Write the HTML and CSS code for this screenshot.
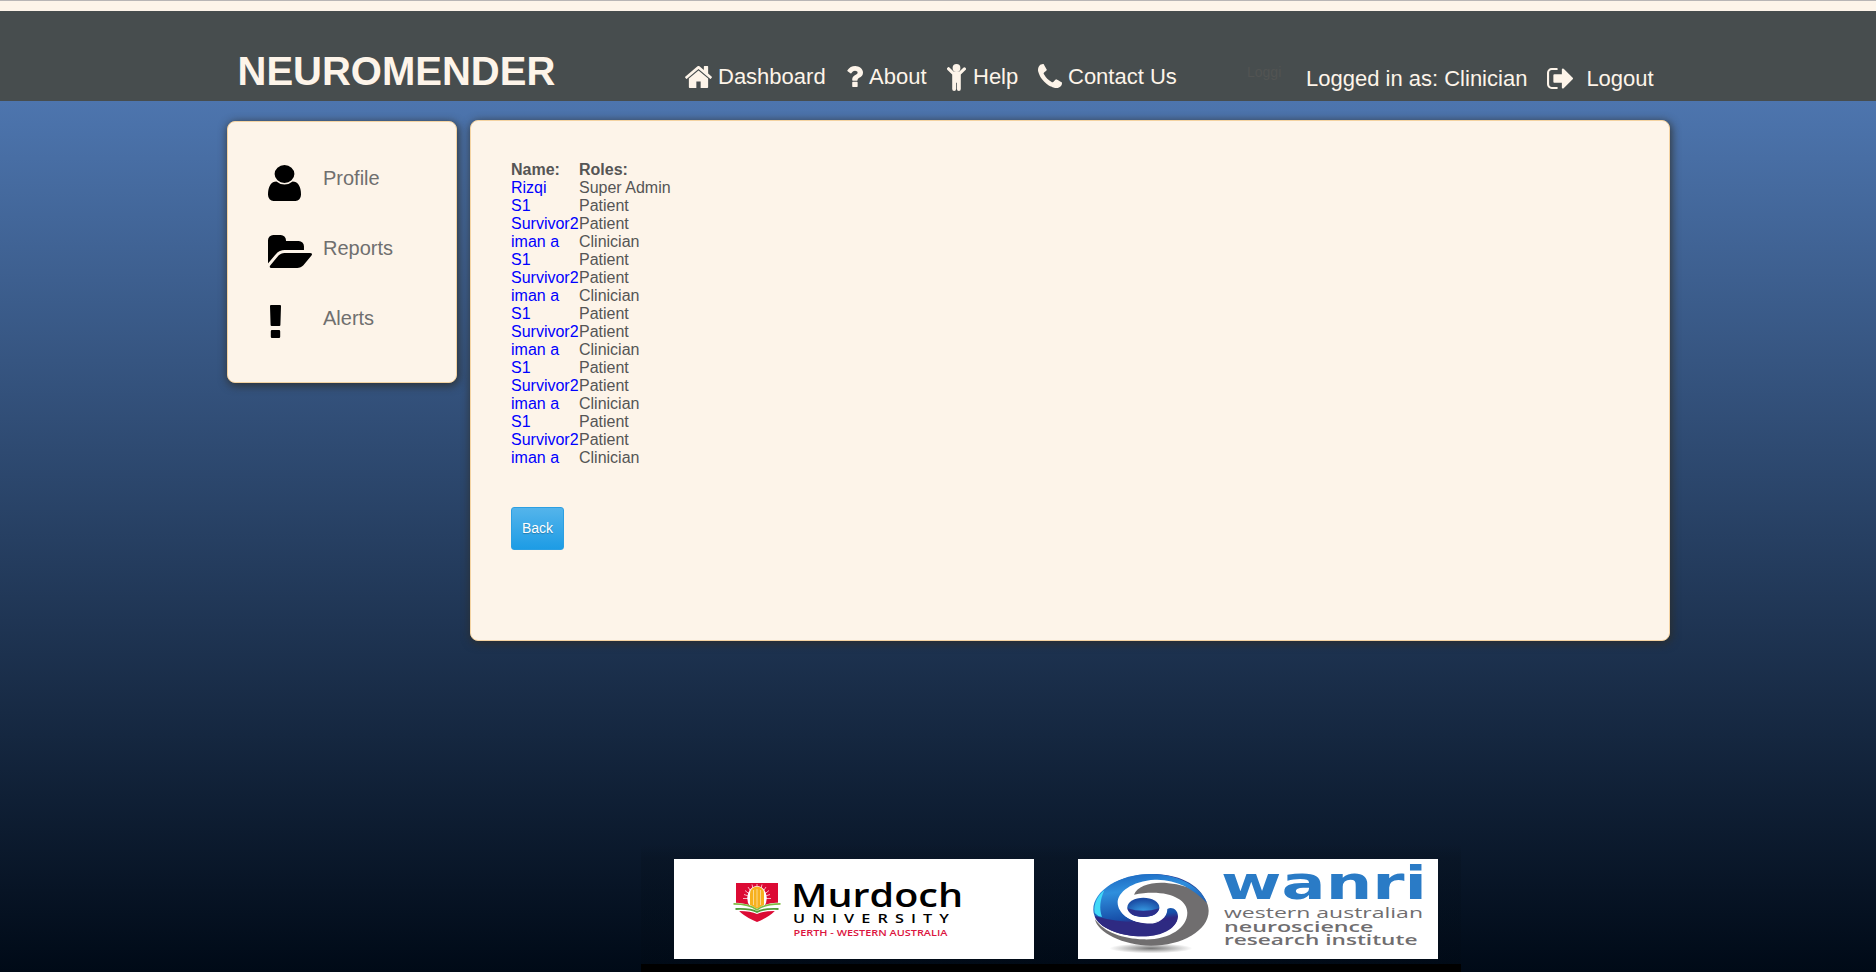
FILE: index.html
```html
<!DOCTYPE html>
<html lang="en">
<head>
<meta charset="utf-8">
<title>Neuromender</title>
<link rel="stylesheet" href="styles.css">
</head>
<body>
<header class="header">
  <h1 class="brand">NEUROMENDER</h1>
  <nav class="nav">
    <a class="nav-item home"><svg class="ic-home" viewBox="89 256 1614 1280" preserveAspectRatio="none"><path d="M1472 992v480q0 26-19 45t-45 19h-384v-384h-256v384h-384q-26 0-45-19t-19-45v-480q0-1 .5-3t.5-3l575-474 575 474q1 2 1 6zm223-69l-62 74q-8 9-21 11h-3q-13 0-21-7l-692-577-692 577q-12 8-24 7-13-2-21-11l-62-74q-8-10-7-23.5t11-21.5l719-599q32-26 76-26t76 26l244 204v-195q0-14 9-23t23-9h192q14 0 23 9t9 23v408l219 182q10 8 11 21.5t-7 23.5z"/></svg><span>Dashboard</span></a>
    <a class="nav-item about"><svg class="ic-question" viewBox="460 256 944 1280" preserveAspectRatio="none"><path d="M1088 1256v240q0 16-12 28t-28 12h-240q-16 0-28-12t-12-28v-240q0-16 12-28t28-12h240q16 0 28 12t12 28zm316-600q0 54-15.5 101t-35 76.5-55 59.5-57.5 43.5-61 35.5q-41 23-68.5 65t-27.5 67q0 17-12 32.5t-28 15.5h-240q-15 0-25.5-18.5t-10.5-37.5v-45q0-83 65-156.5t143-108.5q59-27 84-56t25-76q0-42-46.5-74t-107.5-32q-65 0-108 29-35 25-107 115-13 16-31 16-12 0-25-8l-164-125q-13-10-15.5-25t5.5-28q160-266 464-266 80 0 161 31t146 83 106 127.5 41 158.5z"/></svg><span>About</span></a>
    <a class="nav-item help"><svg class="ic-child" viewBox="0 0 19 27"><circle cx="9.5" cy="4" r="3.9"/><path d="M.5 3.7a1.5 1.5 0 0 1 2.2 0L6.6 7.6h5.8l3.9-3.9a1.5 1.5 0 0 1 2.2 2.2L13.8 10.6V25a1.8 1.8 0 0 1-3.9 0V18.8H9.1V25a1.8 1.8 0 0 1-3.9 0V10.6L.5 5.9a1.5 1.5 0 0 1 0-2.2z"/></svg><span>Help</span></a>
    <a class="nav-item contact"><svg class="ic-phone" viewBox="192 128 1408 1408" preserveAspectRatio="none"><path d="M1600 1240q0 27-10 70.5t-21 68.5q-21 50-122 106-94 51-186 51-27 0-52.5-3.5t-57.5-12.5-47.5-14.5-55.5-20.5-49-18q-98-35-175-83-128-79-264.5-215.5t-215.5-264.5q-48-77-83-175-3-9-18-49t-20.5-55.5-14.5-47.5-12.5-57.5-3.5-52.5q0-92 51-186 56-101 106-122 25-11 68.5-21t70.5-10q14 0 21 3 18 6 53 76 11 19 30 54t35 63.5 31 53.5q3 4 17.5 25t21.5 35.5 7 28.5q0 20-28.5 50t-62 55-62 53-28.5 46q0 9 5 22.5t8.5 20.5 14 24 11.5 19q76 137 174 235t235 174q2 1 19 11.5t24 14 20.5 8.5 22.5 5q18 0 46-28.5t53-62 55-62 50-28.5q14 0 28.5 7t35.5 21.5 25 17.5q25 15 53.5 31t63.5 35 54 30q70 35 76 53 3 7 3 21z"/></svg><span>Contact Us</span></a>
  </nav>
  <span class="ghost">Loggi</span>
  <div class="session">
    <span>Logged in as: Clinician</span>
    <svg class="ic-logout" viewBox="64 256 1568 1280" preserveAspectRatio="none"><path d="M704 1440q0 4 1 20t.5 26.5-3 23.5-10 19.5-20.5 6.5h-320q-119 0-203.5-84.5t-84.5-203.5v-704q0-119 84.5-203.5t203.5-84.5h320q13 0 22.5 9.5t9.5 22.5q0 4 1 20t.5 26.5-3 23.5-10 19.5-20.5 6.5h-320q-66 0-113 47t-47 113v704q0 66 47 113t113 47h312l11.5 1 11.5 3 8 5.5 7 9 2 13.5zm928-544q0 26-19 45l-544 544q-19 19-45 19t-45-19-19-45v-288h-448q-26 0-45-19t-19-45v-384q0-26 19-45t45-19h448v-288q0-26 19-45t45-19 45 19l544 544q19 19 19 45z"/></svg>
    <span>Logout</span>
  </div>
</header>
<div class="page">
  <main class="columns">
    <aside class="card sidebar">
      <a class="side-item"><svg class="ic-user" viewBox="256 128 1280 1536" preserveAspectRatio="none"><path d="M1536 1399q0 109-62.5 187t-150.5 78h-854q-88 0-150.5-78t-62.5-187q0-85 8.5-160.5t31.5-152 58.5-131 94-89 134.5-34.5q131 128 313 128t313-128q76 0 134.5 34.5t94 89 58.5 131 31.5 152 8.5 160.5zm-256-887q0 159-112.500 271.500t-271.500 112.500-271.500-112.500-112.500-271.500 112.500-271.500 271.500-112.500 271.500 112.500 112.500 271.500z"/></svg><span>Profile</span></a>
      <a class="side-item"><svg class="ic-folder" viewBox="0 128 1879 1408" preserveAspectRatio="none"><path d="M1879 952q0 31-31 66l-336 396q-43 51-120.5 86.5t-143.5 35.5h-1088q-34 0-60.5-13t-26.5-43q0-31 31-66l336-396q43-51 120.5-86.5t143.5-35.5h1088q34 0 60.500 13t26.500 43zm-343-344v160h-832q-94 0-197 47.500t-164 119.500l-337 396-5 6q0-4-.5-12.500t-.5-12.500v-960q0-92 66-158t158-66h320q92 0 158 66t66 158v32h544q92 0 158 66t66 158z"/></svg><span>Reports</span></a>
      <a class="side-item"><svg class="ic-alert" viewBox="0 0 11 33"><path d="M1 0h9q1 0 1 1l-.6 19q0 1-1 1H1.600q-1 0-1-1L0 1q0-1 1-1zM2 25h7q1.200 0 1.200 1.200v5.600q0 1.200-1.200 1.200H2Q.8 33 .8 31.800v-5.600Q.8 25 2 25z"/></svg><span>Alerts</span></a>
    </aside>
    <section class="card content">
      <table class="users">
        <tr><th>Name:</th><th>Roles:</th></tr>
        <tr><td><a>Rizqi</a></td><td>Super Admin</td></tr>
        <tr><td><a>S1</a></td><td>Patient</td></tr>
        <tr><td><a>Survivor2</a></td><td>Patient</td></tr>
        <tr><td><a>iman a</a></td><td>Clinician</td></tr>
        <tr><td><a>S1</a></td><td>Patient</td></tr>
        <tr><td><a>Survivor2</a></td><td>Patient</td></tr>
        <tr><td><a>iman a</a></td><td>Clinician</td></tr>
        <tr><td><a>S1</a></td><td>Patient</td></tr>
        <tr><td><a>Survivor2</a></td><td>Patient</td></tr>
        <tr><td><a>iman a</a></td><td>Clinician</td></tr>
        <tr><td><a>S1</a></td><td>Patient</td></tr>
        <tr><td><a>Survivor2</a></td><td>Patient</td></tr>
        <tr><td><a>iman a</a></td><td>Clinician</td></tr>
        <tr><td><a>S1</a></td><td>Patient</td></tr>
        <tr><td><a>Survivor2</a></td><td>Patient</td></tr>
        <tr><td><a>iman a</a></td><td>Clinician</td></tr>
      </table>
      <button class="back">Back</button>
    </section>
  </main>
  <footer class="footer">
    <svg class="logo" viewBox="0 0 360 100">
      <path fill="#dc0a34" d="M62 24h42v21q0 9-21 18-21-9-21-18z"/>
      <g stroke="#fff" stroke-width=".7"><path d="M83 25v10M78 25.500l2 8M88 25.500l-2 8M74 28l4 6M92 28l-4 6M71 31.500l5 4M95 31.500l-5 4M70 35.500l6 2M96 35.500l-6 2M69 39.500h28"/></g>
      <ellipse cx="83" cy="39" rx="9.800" ry="12" fill="#fff"/>
      <path fill="#f7b11e" d="M76 35q0-7 7-7.500 7 .5 7 7.500v11l-7 4-7-4z"/>
      <path stroke="#fff" stroke-width=".5" d="M79.500 31v15M83 30v18M86.500 31v15"/>
      <path fill="#fff" d="M58 43.500q17 0 25 6.500 8-6.500 25-6.500l-4 8.500q-14-.5-21 3-7-3.500-21-3z"/>
      <path fill="none" stroke="#7dbb42" stroke-width="1.700" d="M59.500 44.800q16 0 23.500 6 7.500-6 23.500-6"/>
      <path fill="none" stroke="#519b38" stroke-width="1.900" d="M61.500 50q15-.7 21.500 3 6.500-3.700 21.500-3"/>
      <text class="murdoch" x="117" y="47.700" textLength="172" lengthAdjust="spacingAndGlyphs">Murdoch</text>
      <text class="university" transform="translate(119 63.500) scale(1.3 1)" textLength="120">UNIVERSITY</text>
      <text class="perth" x="119.500" y="77" textLength="154" lengthAdjust="spacingAndGlyphs">PERTH - WESTERN AUSTRALIA</text>
    </svg>
    <svg class="logo" viewBox="0 0 360 100">
      <defs>
        <linearGradient id="blue" x1=".1" y1="0" x2=".35" y2="1"><stop offset="0" stop-color="#1b63bd"/><stop offset=".3" stop-color="#2f8fdd"/><stop offset=".72" stop-color="#174fa9"/><stop offset=".8" stop-color="#302783"/></linearGradient>
        <linearGradient id="rim"><stop offset=".3" stop-color="#2b7fd0"/><stop offset=".6" stop-color="#2d2b86"/><stop offset="1" stop-color="#2363ad"/></linearGradient>
        <radialGradient id="eye" cx=".5" cy=".75" r=".65"><stop offset="0" stop-color="#38a2e8"/><stop offset="1" stop-color="#1b4ca4"/></radialGradient>
        <radialGradient id="shade"><stop offset="0" stop-color="#777"/><stop offset="1" stop-color="#fff"/></radialGradient>
      </defs>
      <g transform="translate(-18 -19) scale(.33333)">
        <ellipse cx="273" cy="325" rx="125" ry="15" fill="url(#shade)"/>
        <path fill="#706e6f" d="M222 164C232 137 280 124 325 130C392 136 446 165 446 212C446 272 365 317 273 317C190 317 111 276 105 237C132 278 190 296 250 298C325 301 382 264 382 218C382 175 318 146 222 164z"/>
        <path fill="url(#rim)" d="M160 130C245 82 405 92 441 189C408 128 310 100 210 122z"/>
        <path fill="url(#blue)" d="M270 102C180 102 100 151 100 209C100 257 172 289 248 289C306 289 354 260 354 229C354 209 336 199 322 207C322 236 294 252 261 250C207 247 174 218 173 189C172 157 215 123 285 119C347 117 399 145 441 189C418 136 350 101 270 102z"/>
        <path fill="#2e2a82" d="M104 228Q175 248 240 246Q270 252 300 243L352 239C340 273 296 289 248 289C177 289 115 263 104 228z"/>
        <path fill="#fff" d="M222 212C240 245 280 252 304 239C292 250 275 252 255 250C220 246 197 232 187 218z"/>
        <path fill="#42d9f8" d="M104 219C98 190 117 164 133 151C120 180 117 205 126 231Q112 229 104 219z"/>
        <ellipse cx="250" cy="202" rx="48" ry="29" fill="url(#eye)"/>
        <path fill="#2b2f8c" d="M202 205Q250 220 298 205Q292 231 250 231Q208 231 202 205z"/>
      </g>
      <text class="wanri" x="143" y="40" textLength="206" lengthAdjust="spacingAndGlyphs">wanri</text>
      <text class="inst light" x="146" y="59" textLength="199" lengthAdjust="spacingAndGlyphs">western australian</text>
      <text class="inst" x="146" y="72.500" textLength="149.500" lengthAdjust="spacingAndGlyphs">neuroscience</text>
      <text class="inst" x="146" y="86" textLength="193.500" lengthAdjust="spacingAndGlyphs">research institute</text>
    </svg>
  </footer>
</div>
</body>
</html>
```
FILE: styles.css
```css
* { box-sizing: border-box; }
body {
  margin: 0;
  height: 974px;
  overflow: hidden;
  background: #fff;
  font-family: "Liberation Sans", Arial, sans-serif;
  color: #555;
}
svg { display: block; flex: none; fill: currentColor; }
.header {
  height: 101px;
  border-top: 1px solid #b8b5b5;
  background: linear-gradient(#fdf4e9 10px, #474d4e 10px);
  color: #fdf4e9;
  display: flex;
  align-items: flex-start;
  padding-left: 237.500px;
  font-size: 22px;
  line-height: 26px;
  white-space: nowrap;
}
.brand { margin: 47px 0 0; width: 447.500px; font-size: 40px; line-height: 46px; }
.nav { display: flex; width: 562px; margin-top: 62px; }
.nav-item { display: flex; align-items: flex-start; }
.nav-item span { margin-top: 1px; }
.home { width: 162px; gap: 6px; }
.about { width: 100px; gap: 6px; }
.help { width: 91px; gap: 7px; }
.contact { gap: 6px; }
.ic-home { width: 27px; height: 22px; margin-top: 3px; }
.ic-question { width: 16px; height: 21px; margin-top: 3px; }
.ic-child { width: 19px; height: 27px; margin-top: 1px; }
.ic-phone { width: 24px; height: 24px; margin-top: 1px; }
.ghost { width: 34px; overflow: hidden; margin: 63px 25px 0 0; font-size: 14px; line-height: 16px; color: #525453; }
.session { display: flex; margin-top: 65px; }
.ic-logout { width: 26px; height: 21px; margin: 2px 13px 0 20px; }
.page {
  height: 871px;
  display: flex;
  flex-direction: column;
  justify-content: space-between;
  align-items: center;
  background: linear-gradient(#4d75ae, #000a17);
}
.columns { display: flex; align-items: flex-start; align-self: flex-start; gap: 13px; padding: 19px 0 0 227px; }
.card {
  background: #fdf4e9;
  border: 1px solid #f4d3a2;
  border-radius: 8px;
  box-shadow: 1px 2px 9px 1px rgba(45, 45, 40, .8);
}
.sidebar { width: 230px; height: 262px; margin-top: 1px; padding: 43px 0 0 40px; }
.side-item { display: grid; grid-template-columns: 55px auto; height: 70px; align-items: start; font-size: 20px; line-height: 24px; color: #6f6f6f; }
.side-item svg { color: #000; }
.side-item span { margin-top: 1px; }
.ic-user { width: 33px; height: 36px; }
.ic-folder { width: 44px; height: 33px; }
.ic-alert { width: 11px; height: 33px; margin-left: 2px; }
.content { width: 1200px; height: 521px; padding: 40px 40px; }
.users { border-collapse: collapse; font-size: 16px; line-height: 18px; }
.users th, .users td { padding: 0; text-align: left; }
.users th:first-child { width: 68px; }
.users a { color: #00f; }
.back {
  display: block;
  margin-top: 40px;
  width: 53px;
  height: 43px;
  padding: 0 0 2px;
  border: 1px solid #2c9fe2;
  border-radius: 3px;
  background: linear-gradient(#54b4eb, #1d9ce5);
  color: #fff;
  font: 14px "Liberation Sans", Arial, sans-serif;
  text-shadow: 0 1px 1px rgba(0, 0, 0, .25);
}
.footer {
  width: 820px;
  height: 128px;
  display: flex;
  gap: 44px;
  padding: 15px 0 0 33px;
  margin-left: 226px;
  border-bottom: 8px solid #000;
  background: linear-gradient(rgba(0, 8, 14, 0), rgba(0, 8, 14, .14) 15px);
}
.logo { width: 360px; height: 100px; background: #fff; }
.murdoch { font: 600 33px "Open Sans", sans-serif; fill: #000; }
.university { font: 600 12.5px "Open Sans", sans-serif; fill: #000; }
.perth { font: 600 9.300px "Open Sans", sans-serif; fill: #dc1440; }
.wanri { font: bold 46px "DejaVu Sans", sans-serif; fill: #2a7bc6; }
.inst { font: 600 14.500px "Open Sans", sans-serif; fill: #706e70; }
.light { font-weight: 400; }
```
